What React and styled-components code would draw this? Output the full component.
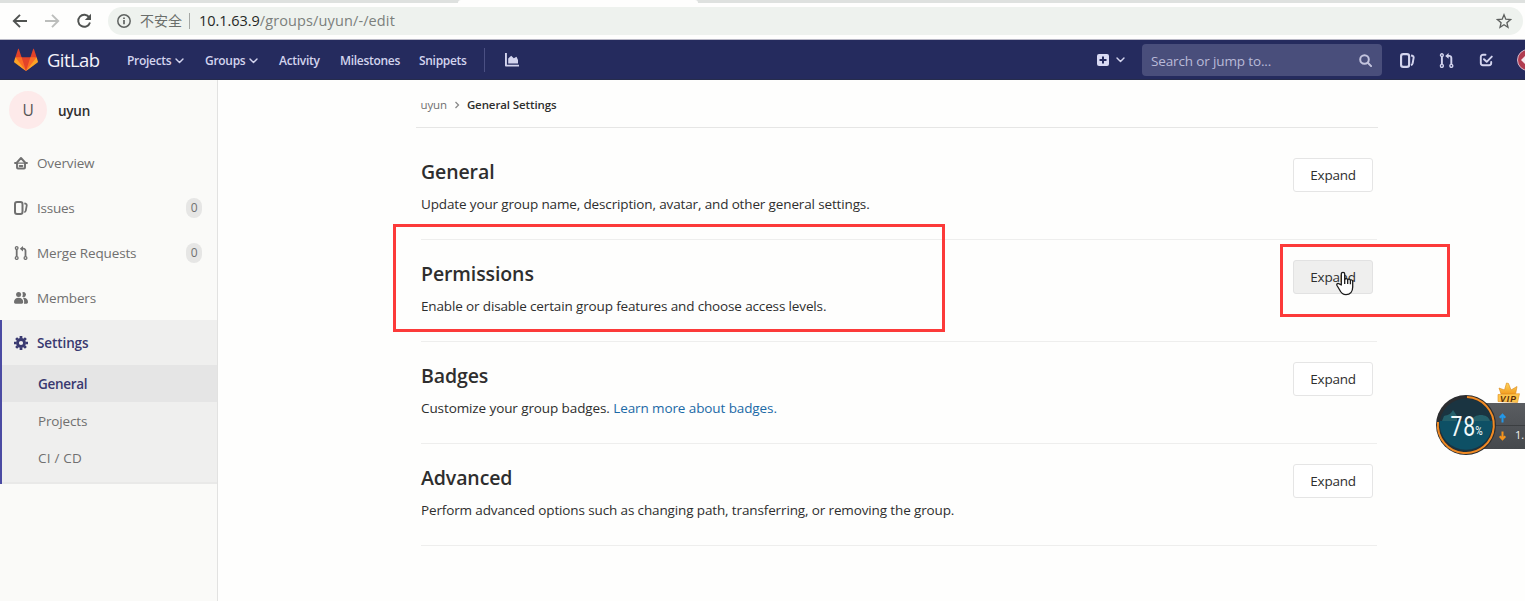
import React from "react";
import styled, { createGlobalStyle } from "styled-components";

const Global = createGlobalStyle`
  * { box-sizing: border-box; }
  body {
    margin: 0;
    width: 1525px;
    height: 601px;
    overflow: hidden;
    background: #fefefd;
    font-family: "Open Sans", "Noto Sans", "Noto Sans CJK SC", sans-serif;
    font-size: 14px;
    color: #2e2e2e;
  }
  svg { display: block; flex: none; }
`;

const Screen = styled.div`
  position: relative;
  width: 1525px;
  height: 601px;
  overflow: hidden;
  display: flex;
  flex-direction: column;
`;

/* Text run with its own size, weight and tracking */
const Label = styled.span`
  font-size: ${(p) => p.$size || 13.5}px;
  font-weight: ${(p) => p.$weight || 400};
  letter-spacing: ${(p) => (p.$track === undefined ? -0.14 : p.$track)}px;
  color: ${(p) => p.$color || "inherit"};
  white-space: nowrap;
  line-height: 20px;
`;

/* ---------- browser ---------- */
const TabStrip = styled.div`
  height: 3px;
  flex: none;
  background: #dee1df;
  display: flex;
  padding-left: 458px;
`;
const ActiveTab = styled.div`
  width: 240px;
  background: #fefefd;
  border-radius: 4px 4px 0 0;
`;
const Toolbar = styled.div`
  height: 37px;
  flex: none;
  display: flex;
  align-items: center;
  padding: 0 2px 1px 12px;
  background: #fefefd;
  border-bottom: 1px solid #b9b9c6;
`;
const NavIcons = styled.div`
  display: flex;
  gap: 16px;
  width: 96px;
`;
const Omnibox = styled.div`
  flex: 1;
  height: 28px;
  border-radius: 14px;
  background: #eef2ee;
  display: flex;
  align-items: center;
  padding: 0 11px 0 8px;
`;
const Insecure = styled.div`
  width: 43px;
  margin-left: 8px;
  display: flex;
`;
const OmniDivider = styled.div`
  width: 1px;
  height: 16px;
  background: #a5a8a5;
  margin: 0 9px 0 6px;
`;
const Url = styled.div`
  flex: 1;
  display: flex;
`;

/* ---------- GitLab top bar ---------- */
const TopBar = styled.header`
  height: 40px;
  flex: none;
  background: #252b5e;
  border-bottom: 1px solid #262c4c;
  display: flex;
  align-items: center;
  color: #d3d4ee;
  padding: 1px 0 0 14px;
`;
const Brand = styled.div`
  display: flex;
  align-items: center;
  gap: 9px;
  width: 113px;
`;
const MenuItem = styled.div`
  width: ${(p) => p.$w}px;
  display: flex;
  align-items: center;
  gap: 4px;
  padding-top: 1px;
`;
const BarDivider = styled.div`
  width: 1px;
  height: 24px;
  background: #4b5083;
  margin-right: 20px;
`;
const BarRight = styled.div`
  margin-left: auto;
  display: flex;
  align-items: center;
`;
const Creator = styled.div`
  display: flex;
  align-items: center;
  gap: 7px;
  margin-right: 17px;
`;
const Search = styled.div`
  width: 240px;
  height: 32px;
  border-radius: 4px;
  background: #494e7b;
  display: flex;
  align-items: center;
  justify-content: space-between;
  padding: 1px 10px 0 9px;
  margin-right: 18px;
`;
const Shortcuts = styled.div`
  display: flex;
  align-items: center;
  gap: 24px;
  width: 125px;
  overflow: hidden;
`;

/* ---------- page ---------- */
const Page = styled.div`
  flex: 1;
  display: flex;
`;
const Sidebar = styled.nav`
  width: 218px;
  flex: none;
  background: #fafaf8;
  border-right: 1px solid #e2e2e1;
`;
const GroupHeader = styled.div`
  height: 60px;
  display: flex;
  align-items: center;
  padding-left: 9px;
  gap: 11px;
`;
const GroupName = styled.div`
  display: flex;
  padding-top: 2px;
`;
const Avatar = styled.div`
  width: 38px;
  height: 38px;
  border-radius: 50%;
  background: #fdeaea;
  display: flex;
  align-items: center;
  justify-content: center;
`;
const SideItem = styled.div`
  height: 45px;
  display: flex;
  align-items: center;
  gap: 9px;
  color: ${(p) => (p.$active ? "#393970" : "#707070")};
  padding: 0 15px 0 ${(p) => (p.$active ? 12 : 14)}px;
`;
const Count = styled.div`
  width: 16px;
  height: 20px;
  border-radius: 8px;
  background: #e6e6e5;
  margin-left: auto;
  display: flex;
  align-items: center;
  justify-content: center;
`;
const ActiveBlock = styled.div`
  height: 164px;
  border-left: 2px solid #4b4ba3;
  background: linear-gradient(#efefee 162px, #e9e9e8 162px);
`;
const SubItem = styled.div`
  height: 37px;
  display: flex;
  align-items: center;
  padding: 1px 0 0 36px;
  background: ${(p) => (p.$active ? "#e5e5e5" : "transparent")};
  color: ${(p) => (p.$active ? "#393970" : "#707070")};
`;
const Content = styled.main`
  width: 962px;
  margin-left: 198px;
`;
const Breadcrumbs = styled.div`
  height: 48px;
  display: flex;
  align-items: center;
  gap: 7px;
  padding: 2px 0 0 4.5px;
  border-bottom: 1px solid #e6e6e5;
`;
const Section = styled.section`
  height: ${(p) => (p.$first ? 112 : 102)}px;
  margin: 0 1px 0 5px;
  padding: ${(p) => (p.$first ? 30 : 20)}px 4px 0 0;
  border-bottom: 1px solid #eeeeed;
  display: flex;
  justify-content: space-between;
  align-items: flex-start;
`;
const Copy = styled.div`
  display: flex;
  flex-direction: column;
  gap: 12px;
  padding-top: 4px;
`;
const Expand = styled.button`
  width: 80px;
  height: 34px;
  padding: 0;
  border: 1px solid ${(p) => (p.$hover ? "#e2e2e2" : "#e5e5e5")};
  border-radius: 3px;
  background: ${(p) => (p.$hover ? "#efefee" : "#fff")};
  font-family: inherit;
  color: #2e2e2e;
`;

/* ---------- overlays ---------- */
const Marker = styled.div`
  position: absolute;
  left: ${(p) => p.$x}px;
  top: ${(p) => p.$y}px;
  width: ${(p) => p.$w}px;
  height: ${(p) => p.$h}px;
  border: 3px solid #fc3a39;
`;
const Pointer = styled.div`
  position: absolute;
  left: 1336px;
  top: 271px;
`;
const Widget = styled.div`
  position: absolute;
  left: 1430px;
  top: 378px;
  width: 95px;
  height: 84px;
`;

const Chevron = () => (
  <svg width="9" height="6" viewBox="0 0 9 6" fill="none" stroke="currentColor" strokeWidth="1.400" strokeLinecap="round" strokeLinejoin="round">
    <path d="M1 1l3.500 3.600L8 1" />
  </svg>
);
const IssuesIcon = ({ s = 14 }) => (
  <svg width={s} height={s} viewBox="0 0 14 14" fill="none" stroke="currentColor" strokeWidth="2">
    <rect x="1" y="1" width="7.500" height="12" rx="2" />
    <path d="M10.300 2.300l1.200.3c.9.300 1.400 1 1.200 2l-.9 5c-.2.900-.7 1.500-1.600 1.600" strokeWidth="1.800" />
  </svg>
);
const MergeIcon = ({ s = 14 }) => (
  <svg width={s} height={s} viewBox="0 0 14 14" fill="none" stroke="currentColor">
    <circle cx="2.700" cy="2" r="1.300" strokeWidth="1.300" />
    <circle cx="2.700" cy="12" r="1.400" strokeWidth="1.300" />
    <circle cx="11.500" cy="12" r="1.400" strokeWidth="1.300" />
    <path d="M2.700 3.300v7.300M11.500 10.600V4.700A2 2 0 0 0 9.500 2.700H8" strokeWidth="1.800" />
    <path d="M9 0v5.400L5.800 2.700z" fill="currentColor" stroke="none" />
  </svg>
);
const HomeIcon = () => (
  <svg width="14" height="14" viewBox="0 0 14 14" fill="none" stroke="currentColor" strokeWidth="1.900" strokeLinejoin="round" strokeLinecap="round">
    <path d="M1 7h1.500L7 2l4.500 5H13" />
    <path d="M3 7v4.500c0 .6.400 1 1 1h6c.6 0 1-.4 1-1V7" />
    <path d="M5.600 10h2.800" />
    <path d="M3 7.100h8" strokeWidth="1.400" />
  </svg>
);
const MembersIcon = () => (
  <svg width="14" height="14" viewBox="0 0 14 14" fill="currentColor">
    <circle cx="4.600" cy="3.600" r="2.500" />
    <path d="M8.200 1.500a2.500 2.500 0 1 1 0 4.300c.8-1.300.8-3 0-4.300z" />
    <path d="M0 11c0-2.500 1.700-4.200 4.600-4.200S9.200 8.500 9.200 11c0 1-.6 1.700-1.500 1.700H1.500C.6 12.700 0 12 0 11z" />
    <path d="M9 6.900c3-.3 5 1.500 5 4.200 0 1-.6 1.600-1.400 1.600H9.900c.6-1.900.3-4.300-.9-5.800z" />
  </svg>
);
const GearIcon = () => (
  <svg width="14" height="14" viewBox="0 0 14 14" fill="none" stroke="currentColor">
    <circle cx="7" cy="7" r="3.500" strokeWidth="2.800" />
    <path d="M7 0v2.600M7 11.400V14M0 7h2.600M11.400 7H14M2.100 2.100l1.700 1.700M10.200 10.200l1.700 1.700M11.900 2.100l-1.700 1.700M3.800 10.200l-1.700 1.700" strokeWidth="2.700" />
  </svg>
);
const Tanuki = () => (
  <svg width="24" height="24" viewBox="0 0 36 36">
    <path fill="#e24329" d="M2 14l9.380 9v-9l-4-12.280c-.205-.632-1.176-.632-1.380 0z" />
    <path fill="#e24329" d="M34 14l-9.380 9v-9l4-12.280c.205-.632 1.176-.632 1.380 0z" />
    <path fill="#e24329" d="M18 34.380L3 14h30z" />
    <path fill="#fc6d26" d="M18 34.380L11.380 14H2l4 11z" />
    <path fill="#fc6d26" d="M18 34.380L24.620 14H34l-4 11z" />
    <path fill="#fca326" d="M2 14L.1 20.160c-.18.565 0 1.200.5 1.560l17.420 12.660z" />
    <path fill="#fca326" d="M34 14l1.900 6.160c.18.565 0 1.200-.5 1.560L18 34.380z" />
  </svg>
);

const sections = [
  { title: "General", text: "Update your group name, description, avatar, and other general settings." },
  { title: "Permissions", text: "Enable or disable certain group features and choose access levels.", hover: true },
  { title: "Badges", text: "Customize your group badges. ", link: "Learn more about badges.", track: -0.1 },
  { title: "Advanced", text: "Perform advanced options such as changing path, transferring, or removing the group.", track: -0.13 },
];

const BrowserChrome = () => (
  <>
    <TabStrip><ActiveTab /></TabStrip>
    <Toolbar>
      <NavIcons>
        <svg width="16" height="16" viewBox="0 0 16 16" fill="none" stroke="#505351" strokeWidth="1.900"><path d="M15 8H2.500M8 1.800L1.800 8 8 14.200" /></svg>
        <svg width="16" height="16" viewBox="0 0 16 16" fill="none" stroke="#bcbebc" strokeWidth="1.900"><path d="M1 8h12.500M8 1.800L14.200 8 8 14.200" /></svg>
        <svg width="16" height="16" viewBox="0 0 16 16" fill="none" stroke="#505351" strokeWidth="1.900"><path d="M13.300 4.500A6 6 0 1 0 14 9.400" /><path d="M15 .8v6.200H8.800z" fill="#505351" stroke="none" /></svg>
      </NavIcons>
      <Omnibox>
        <svg width="16" height="16" viewBox="0 0 16 16" fill="none" stroke="#5f6361" strokeWidth="1.500"><circle cx="8" cy="8" r="6.200" /><path d="M8 7v4.300M8 4.500v1.500" strokeWidth="1.700" /></svg>
        <Insecure><Label $size={14} $track={0} $color="#6a6e6b">不安全</Label></Insecure>
        <OmniDivider />
        <Url>
          <Label $size={14.5} $track={-0.05} $color="#262826">10.1.63.9</Label>
          <Label $size={14.5} $track={0.12} $color="#7b7f7c">/groups/uyun/-/edit</Label>
        </Url>
        <svg width="16" height="16" viewBox="0 0 16 16" fill="none" stroke="#5d605e" strokeWidth="1.300"><path d="M8 1.800l1.800 4.400 4.700.4-3.600 3.100 1.100 4.600L8 11.800l-4 2.500 1.100-4.600L1.500 6.600l4.700-.4z" /></svg>
      </Omnibox>
    </Toolbar>
  </>
);

const MenuLabel = ({ children }) => <Label $size={12} $track={-0.3} $weight={600}>{children}</Label>;

const Header = () => (
  <TopBar>
    <Brand>
      <Tanuki />
      <Label $size={18.5} $track={-0.6} $color="#f4f4fb">GitLab</Label>
    </Brand>
    <MenuItem $w={78}><MenuLabel>Projects</MenuLabel><Chevron /></MenuItem>
    <MenuItem $w={74}><MenuLabel>Groups</MenuLabel><Chevron /></MenuItem>
    <MenuItem $w={61}><MenuLabel>Activity</MenuLabel></MenuItem>
    <MenuItem $w={79}><MenuLabel>Milestones</MenuLabel></MenuItem>
    <MenuItem $w={65}><MenuLabel>Snippets</MenuLabel></MenuItem>
    <BarDivider />
    <svg width="15" height="14" viewBox="0 0 15 14" fill="currentColor"><path d="M0 0h1.900v11.700H14V13.600H1.200C.5 13.600 0 13.100 0 12.400z" /><path d="M3.200 10.500V5.600l3-2.800 2.600 2.400 2.700-1.400 1.500 3.100v3.600z" /></svg>
    <BarRight>
      <Creator>
        <svg width="12" height="12" viewBox="0 0 12 12"><rect width="12" height="12" rx="2" fill="#d9daf4" /><path d="M6 2.500v7M2.500 6h7" stroke="#252b5e" strokeWidth="2" /></svg>
        <Chevron />
      </Creator>
      <Search>
        <Label $color="#b9bad8" $track={-0.14}>Search or jump to...</Label>
        <svg width="13" height="13" viewBox="0 0 13 13" fill="none" stroke="#c3c4de" strokeWidth="2"><circle cx="5.500" cy="5.500" r="4.300" /><path d="M8.800 8.800l3.300 3.300" strokeLinecap="round" /></svg>
      </Search>
      <Shortcuts>
        <IssuesIcon s={15} />
        <MergeIcon s={15} />
        <svg width="15" height="14" viewBox="-1 0 15 14" fill="none" stroke="currentColor" strokeWidth="1.900" strokeLinecap="round" strokeLinejoin="round"><path d="M6.500 1.800H4A2.200 2.200 0 0 0 1.800 4v6A2.200 2.200 0 0 0 4 12.200h6a2.200 2.200 0 0 0 2.200-2.200V9" /><path d="M5 6.200l2.700 2.600L12.800 3.600" /></svg>
        <svg width="22" height="22" viewBox="0 0 22 22"><circle cx="11" cy="11" r="10.500" fill="#b13c50" stroke="#d9b9cb" /><path d="M4 11l4-4v2.500h5v3H8V15z" fill="#f5e9ef" /></svg>
      </Shortcuts>
    </BarRight>
  </TopBar>
);

const SideNav = () => (
  <Sidebar>
    <GroupHeader>
      <Avatar><Label $size={15.5} $color="#555">U</Label></Avatar>
      <GroupName><Label $weight={600} $track={-0.25}>uyun</Label></GroupName>
    </GroupHeader>
    <SideItem><HomeIcon /><Label>Overview</Label></SideItem>
    <SideItem><IssuesIcon /><Label $track={-0.25}>Issues</Label><Count><Label $size={12}>0</Label></Count></SideItem>
    <SideItem><MergeIcon /><Label>Merge Requests</Label><Count><Label $size={12}>0</Label></Count></SideItem>
    <SideItem><MembersIcon /><Label>Members</Label></SideItem>
    <ActiveBlock>
      <SideItem $active><GearIcon /><Label $weight={600} $track={-0.1}>Settings</Label></SideItem>
      <SubItem $active><Label $weight={600} $track={-0.3}>General</Label></SubItem>
      <SubItem><Label>Projects</Label></SubItem>
      <SubItem><Label $track={0.2}>CI / CD</Label></SubItem>
    </ActiveBlock>
  </Sidebar>
);

export default function App() {
  return (
    <Screen>
      <Global />
      <BrowserChrome />
      <Header />
      <Page>
        <SideNav />
        <Content>
          <Breadcrumbs>
            <Label $size={11.5} $color="#707070">uyun</Label>
            <svg width="6" height="8" viewBox="0 0 6 8" fill="none" stroke="#8a8a8a" strokeWidth="1.300"><path d="M1.500 1l3 3-3 3" /></svg>
            <Label $size={11.5} $weight={600} $track={-0.1}>General Settings</Label>
          </Breadcrumbs>
          {sections.map((s, i) => (
            <Section key={s.title} $first={i === 0}>
              <Copy>
                <Label $size={19.5} $weight={600} $track={-0.1}>{s.title}</Label>
                <Label $track={s.track}>{s.text}{s.link && <Label $color="#1b69a6" $track={s.track}>{s.link}</Label>}</Label>
              </Copy>
              <Expand $hover={s.hover}><Label $track={-0.25}>Expand</Label></Expand>
            </Section>
          ))}
        </Content>
      </Page>
      <Marker $x={393} $y={224} $w={552} $h={108} />
      <Marker $x={1280} $y={244} $w={170} $h={73} />
      <Pointer>
        <svg width="18" height="25" viewBox="0 0 18 25" fill="#fff" stroke="#1c1c1c" strokeWidth="1.300" strokeLinejoin="round">
          <path d="M5.300 14V3a1.700 1.700 0 0 1 3.400 0v5.500c.4-1.400 2.800-1.300 3 .3.500-1.100 2.500-.8 2.700.5.700-.8 2.300-.4 2.300 1.100V16c0 4.500-2.500 7.700-6.700 7.700-3.500 0-5-1.900-6.300-4.700L1 14.500c-.8-1.700 1-2.800 2.300-1.600z" />
          <path d="M8.700 8v5M11.700 9v4M14.400 9.500v3.800" fill="none" />
        </svg>
      </Pointer>
      <Widget>
        <svg width="95" height="84" viewBox="0 0 95 84">
          <defs>
            <linearGradient id="panel" x1="0" y1="0" x2="0" y2="1"><stop offset="0" stopColor="#5a5d61" /><stop offset="1" stopColor="#45484c" /></linearGradient>
            <linearGradient id="gold" x1="0" y1="0" x2="0" y2="1"><stop offset="0" stopColor="#ffd65c" /><stop offset="1" stopColor="#f29a1c" /></linearGradient>
          </defs>
          <path d="M50 25h45v46H50z" fill="url(#panel)" />
          <path d="M66 47.500h29" stroke="#3b3e41" />
          <circle cx="36" cy="47" r="30" fill="#2b2d30" />
          <circle cx="36" cy="47" r="26.500" fill="#1a3441" />
          <path d="M9.600 43h52.800a26.500 26.500 0 1 1-52.800 0z" fill="#0e5065" />
          <path d="M14 38c4-1 7-2 9-6l4 6v5H12zM41 43c3-8 17-8 19 0z" fill="#24606b" />
          <path d="M37 19.100A28 28 0 1 1 8 44" fill="none" stroke="#f08a24" strokeWidth="2" />
          <path d="M72.500 44.500v-7M69.700 39.800l2.800-3 2.800 3" fill="none" stroke="#2397e8" strokeWidth="2" />
          <path d="M72.500 53.500v7M69.700 58.200l2.800 3 2.800-3" fill="none" stroke="#f5941d" strokeWidth="2" />
          <path d="M71 16l-2-6 5.500 2 2-7 2 .5 2.500 6.500 6-3.500-1.500 8z" fill="url(#gold)" stroke="#d98718" strokeWidth=".6" />
          <path d="M68 16.500l21.500-.8-2 8.800-19.500-1z" fill="#ffc54a" stroke="#dd8d22" strokeWidth=".6" />
          <text x="70" y="23.500" fontSize="8.500" fontWeight="700" fontStyle="italic" fontFamily="Liberation Sans, sans-serif" fill="#5a2c08" textLength="16">VIP</text>
          <g transform="translate(20.500 58) scale(.78 1)" fontFamily="Roboto, sans-serif" fill="#f3fafb">
            <text fontSize="27" letterSpacing="1.200">78<tspan fontSize="13" dx="-1" dy="-1" letterSpacing="0">%</tspan></text>
          </g>
          <text x="85" y="61" fontSize="11" fontFamily="Open Sans, sans-serif" fill="#f2f2f2">1.</text>
        </svg>
      </Widget>
    </Screen>
  );
}
